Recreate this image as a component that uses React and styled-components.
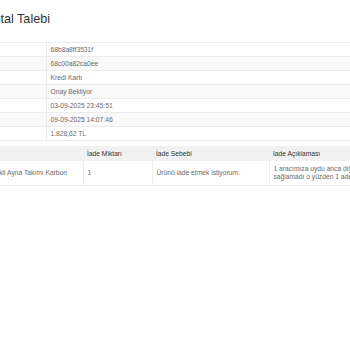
import React from "react";
import styled, { createGlobalStyle } from "styled-components";

const GlobalStyle = createGlobalStyle`
    html,
    body {
        margin: 0;
        padding: 0;
        background: #fff;
        overflow: hidden;
    }

    body {
        font-family: "Liberation Sans", Arial, sans-serif;
        color: #555;
    }
`;

const Viewport = styled.div`
    width: 350px;
    height: 350px;
    overflow: hidden;
`;

// the page is wider than the window and scrolled to the right
const Page = styled.div`
    width: 549px;
    margin-left: -120px;
`;

const Title = styled.h1`
    margin: 0 0 13px;
    padding: 10px 0 0 110px;
    font-size: 12.6px;
    line-height: 19px;
    font-weight: 400;
    color: #333;
`;

const InfoTable = styled.table`
    width: 100%;
    border-collapse: collapse;
    font-size: 6.7px;
    margin-bottom: 5px;
`;

const InfoRow = styled.tr`
    background: ${({ $striped }) => ($striped ? "#f9f9f9" : "#fff")};
    border-top: 1px solid #ececec;

    &:last-child {
        border-bottom: 1px solid #ececec;
    }
`;

const InfoLabel = styled.th`
    box-sizing: border-box;
    width: 166px;
    padding: 3px 4px;
    line-height: 7px;
    text-align: left;
    font-weight: 700;
    color: #333;
    border-right: 1px solid #ececec;
    white-space: nowrap;
`;

const InfoValue = styled.td`
    padding: 3px 4px;
    line-height: 7px;
    color: #6a6a6a;
`;

const ItemsTable = styled.table`
    width: 100%;
    border-collapse: collapse;
    font-size: 6.7px;
    table-layout: fixed;
`;

const HeadCell = styled.th`
    box-sizing: border-box;
    width: ${({ $w }) => $w};
    padding: 4px;
    line-height: 7px;
    text-align: left;
    font-weight: 400;
    color: #333;
    background: #f1f1f1;
    white-space: nowrap;
    overflow: hidden;
`;

const BodyRow = styled.tr`
    border-bottom: 1px solid #ececec;
`;

const BodyCell = styled.td`
    box-sizing: border-box;
    padding: 4px;
    line-height: 8px;
    color: #6a6a6a;
    vertical-align: middle;
    border-left: 1px solid #ececec;
    white-space: ${({ $wrap }) => ($wrap ? "normal" : "nowrap")};
    overflow: hidden;

    &:first-child {
        border-left: none;
    }
`;

const info = [
    ["Talep No", "68b8a8ff3531f"],
    ["Sipariş No", "68c00a82ca0ee"],
    ["Ödeme Tipi", "Kredi Kartı"],
    ["Durum", "Onay Bekliyor"],
    ["Sipariş Tarihi", "03-09-2025 23:45:51"],
    ["Talep Tarihi", "09-09-2025 14:07:46"],
    ["Tutar", "1.828,62 TL"],
];

const columns = [
    ["Ürün", "203px"],
    ["İade Miktarı", "69px"],
    ["İade Sebebi", "117px"],
    ["İade Açıklaması", "160px"],
];

const App = () => (
    <Viewport>
        <GlobalStyle />
        <Page>
            <Title>İptal Talebi</Title>
            <InfoTable>
                <tbody>
                    {info.map(([label, value], i) => (
                        <InfoRow key={label} $striped={i % 2 === 1}>
                            <InfoLabel>{label}</InfoLabel>
                            <InfoValue>{value}</InfoValue>
                        </InfoRow>
                    ))}
                </tbody>
            </InfoTable>
            <ItemsTable>
                <thead>
                    <tr>
                        {columns.map(([name, w]) => (
                            <HeadCell key={name} $w={w}>
                                {name}
                            </HeadCell>
                        ))}
                    </tr>
                </thead>
                <tbody>
                    <BodyRow>
                        <BodyCell>Passat B8.5 2015-2020 Katlanır Elektrikli Ayna Takımı Karbon</BodyCell>
                        <BodyCell>1</BodyCell>
                        <BodyCell>Ürünü iade etmek istiyorum.</BodyCell>
                        <BodyCell $wrap>
                            1 aracımıza uydu anca diğer aracımıza uyum sağlamadı o yüzden 1 adetini iade ediyorum.
                        </BodyCell>
                    </BodyRow>
                </tbody>
            </ItemsTable>
        </Page>
    </Viewport>
);

export default App;
